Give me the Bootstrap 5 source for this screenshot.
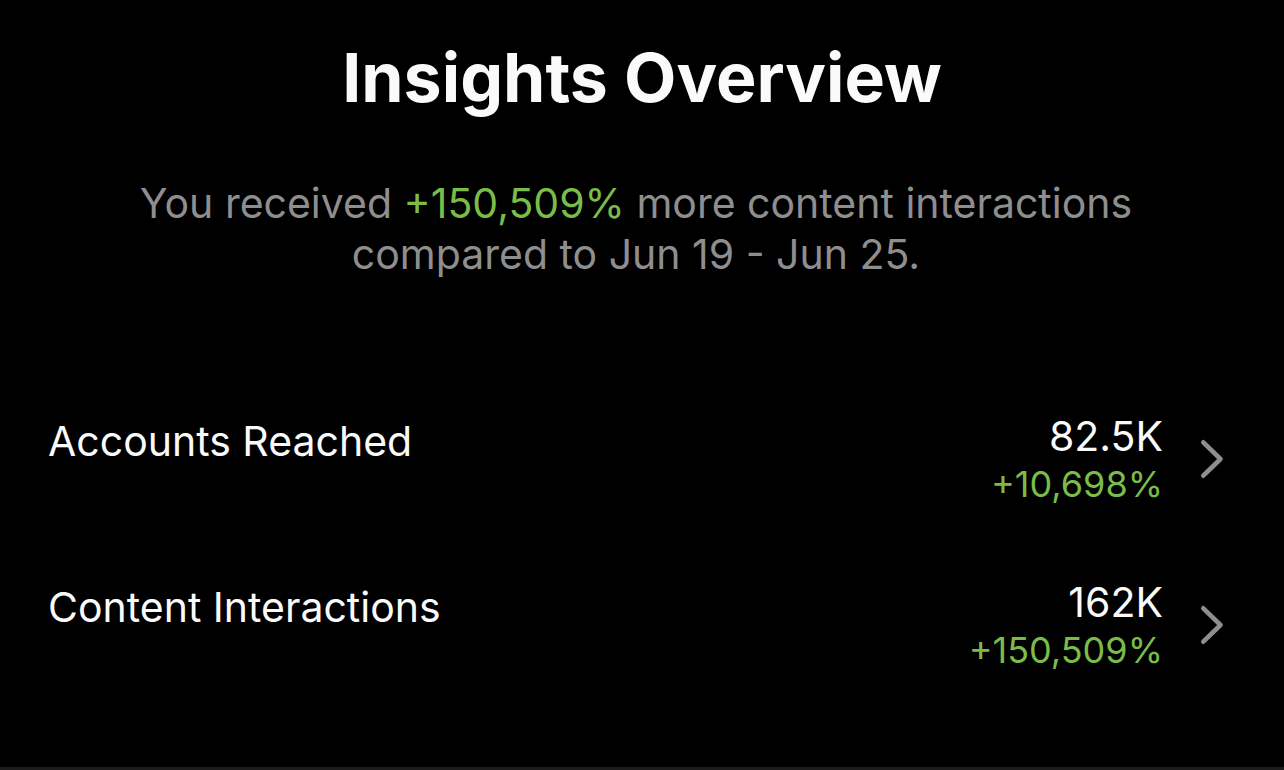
<!DOCTYPE html>
<html lang="en" data-bs-theme="dark">
<head>
<meta charset="utf-8">
<meta name="viewport" content="width=device-width, initial-scale=1">
<title>Insights Overview</title>
<link href="https://cdn.jsdelivr.net/npm/bootstrap@5.3.0/dist/css/bootstrap.min.css" rel="stylesheet">
<style>
body { background: #000; color: #fafafa; font-family: Inter, "Liberation Sans", sans-serif; }
.insights { min-height: 100vh; border-bottom: 3px solid #1c1c1c; padding-top: 35px; }
.insights-title { font-size: 68px; line-height: 84px; font-weight: 700; color: #fafafa; }
.summary, .metrics { padding: 0 60px 0 48px; }
.summary { font-size: 41px; line-height: 51px; color: #8e8e8e; margin: 59px 0 132px; }
.gain { color: #7abc48; }
.metric { font-size: 41px; line-height: 48px; height: 166px; color: #fafafa; }
.metric-label { padding-top: 5px; }
.metric .gain { font-size: 36px; }
.chevron { width: 24px; height: 40px; margin: 27px 0 0 37px; }
</style>
</head>
<body>
<main class="insights">
<header class="text-center">
<h1 class="insights-title mb-0">Insights Overview</h1>
<p class="summary">You received <span class="gain">+150,509%</span> more content interactions<br>compared to Jun 19 - Jun 25.</p>
</header>
<nav class="metrics" aria-label="Insights">
<a href="#reached" class="metric d-flex align-items-start text-decoration-none">
<span class="metric-label me-auto">Accounts Reached</span>
<span class="text-end"><span class="d-block">82.5K</span><span class="gain d-block">+10,698%</span></span>
<svg class="chevron" viewBox="0 0 24 40" fill="none" stroke="#8e8e8e" stroke-width="4.6" aria-hidden="true"><path d="M3.3 3.3 20.5 20 3.3 36.7" stroke-linecap="round" stroke-linejoin="round"/></svg>
</a>
<a href="#interactions" class="metric d-flex align-items-start text-decoration-none">
<span class="metric-label me-auto">Content Interactions</span>
<span class="text-end"><span class="d-block">162K</span><span class="gain d-block">+150,509%</span></span>
<svg class="chevron" viewBox="0 0 24 40" fill="none" stroke="#8e8e8e" stroke-width="4.6" aria-hidden="true"><path d="M3.3 3.3 20.5 20 3.3 36.7" stroke-linecap="round" stroke-linejoin="round"/></svg>
</a>
</nav>
</main>
<script src="https://cdn.jsdelivr.net/npm/bootstrap@5.3.0/dist/js/bootstrap.bundle.min.js"></script>
</body>
</html>
